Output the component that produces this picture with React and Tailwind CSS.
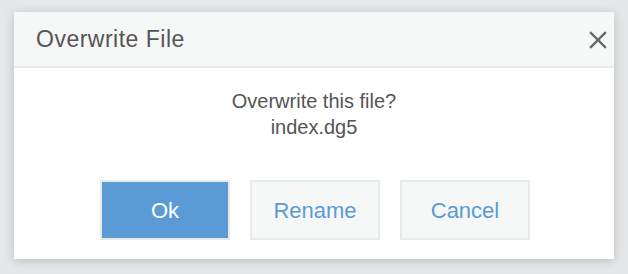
import React from 'react'

const App = () => {
  return (
    <div className="w-[628px] h-[274px] bg-[#e6e7e9] pt-[12px] pl-[14px] font-['Liberation_Sans',Arial,sans-serif]">
      <div className="w-[600px] h-[247px] bg-white shadow-[0_2px_10px_rgba(0,0,0,0.18)] flex flex-col">
        <div className="h-[56px] bg-[#f6f8f8] border-b-2 border-[#e8ecec] flex items-center justify-between pl-[22px] pr-[7px]">
          <span className="text-[23px] tracking-[0.5px] text-[#555555]">Overwrite File</span>
          <svg width="18" height="18" viewBox="0 0 18 18" className="mt-[1px]">
            <path d="M2 2 L16 16 M16 2 L2 16" stroke="#666666" strokeWidth="2.4" strokeLinecap="square" />
          </svg>
        </div>
        <div className="flex flex-col items-center pt-[20px]">
          <p className="text-[20px] leading-[26px] text-[#555555] text-center">
            Overwrite this file?
            <br />
            index.dg5
          </p>
          <div className="flex gap-[20px] mt-[40px] ml-[2px]">
            <button className="w-[130px] h-[60px] bg-[#5b9bd5] border-2 border-[#e6e9ea] text-white text-[22px]">
              Ok
            </button>
            <button className="w-[130px] h-[60px] bg-[#f6f8f8] border-2 border-[#e8ebeb] text-[#5b9bd5] text-[22px]">
              Rename
            </button>
            <button className="w-[130px] h-[60px] bg-[#f6f8f8] border-2 border-[#e8ebeb] text-[#5b9bd5] text-[22px]">
              Cancel
            </button>
          </div>
        </div>
      </div>
    </div>
  )
}

export default App
